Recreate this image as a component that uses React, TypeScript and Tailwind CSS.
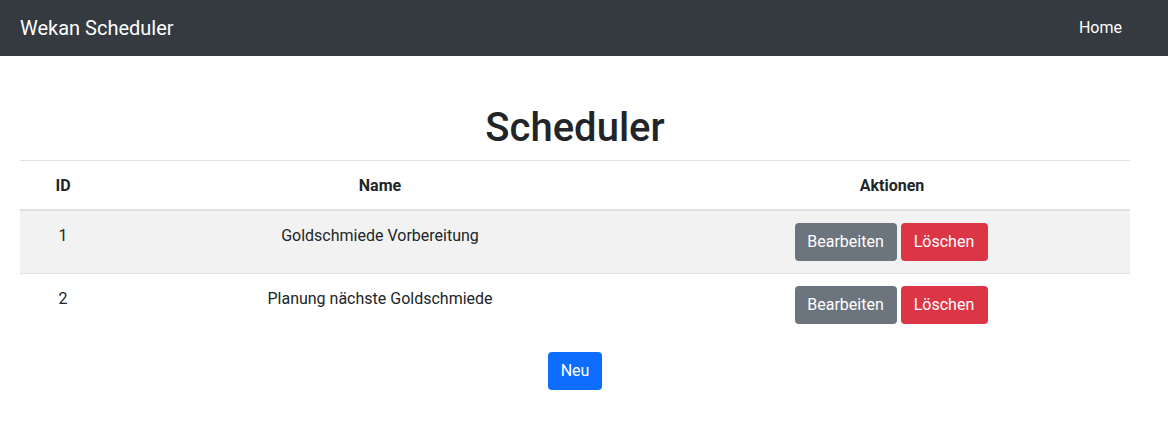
const rows = [
  { id: 1, name: "Goldschmiede Vorbereitung" },
  { id: 2, name: "Planung nächste Goldschmiede" },
];

export default function App() {
  return (
    <div className="min-h-screen bg-white text-[#212529] font-['Roboto',sans-serif] text-base leading-6">
      {/* Navbar */}
      <nav className="h-14 bg-[#343a40] flex items-center justify-between pl-5 pr-[38px]">
        <span className="text-xl leading-[30px] text-white">Wekan Scheduler</span>
        <a className="px-2 text-white">Home</a>
      </nav>

      <main className="ml-5 w-[1110px] pt-12">
        <h1 className="text-[40px] leading-[48px] font-medium text-center mb-2">Scheduler</h1>

        <table className="w-full border-collapse text-center">
          <thead>
            <tr className="border-t border-[#dee2e6] border-b-2">
              <th className="w-[86px] px-3 pt-[13px] pb-[11px] font-bold">ID</th>
              <th className="w-[548px] px-3 pt-[13px] pb-[11px] font-bold">Name</th>
              <th className="px-3 pt-[13px] pb-[11px] font-bold">Aktionen</th>
            </tr>
          </thead>
          <tbody>
            {rows.map((r, i) => (
              <tr
                key={r.id}
                className={`border-t border-[#dee2e6] ${i % 2 === 0 ? "bg-[#f2f2f2]" : ""}`}
              >
                <td className="px-3 pt-[13px] pb-3 align-top">{r.id}</td>
                <td className="px-3 pt-[13px] pb-3 align-top">{r.name}</td>
                <td className="py-3 pl-[11px] pr-[13px] align-top">
                  <div className="flex justify-center gap-1">
                    <button className="h-[38px] w-[102px] rounded bg-[#6c757d] text-white">Bearbeiten</button>
                    <button className="h-[38px] w-[87px] rounded bg-[#dc3545] text-white">Löschen</button>
                  </div>
                </td>
              </tr>
            ))}
          </tbody>
        </table>

        <div className="flex justify-center mt-4">
          <button className="h-[38px] w-[54px] rounded bg-[#0d6efd] text-white">Neu</button>
        </div>
      </main>
    </div>
  );
}
